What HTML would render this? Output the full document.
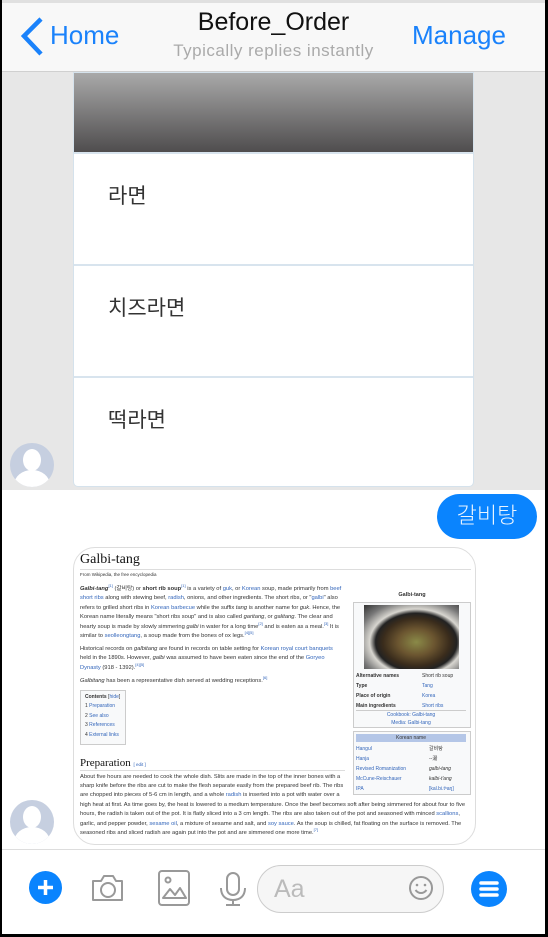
<!DOCTYPE html>
<html><head><meta charset="utf-8"><style>
*{margin:0;padding:0;box-sizing:border-box}
body{width:548px;height:937px;position:relative;overflow:hidden;background:#000;font-family:"Liberation Sans","Noto Sans CJK KR",sans-serif}
#scr{position:absolute;left:2px;top:0;width:543px;height:934px;background:#fff;overflow:hidden}
.abs{position:absolute}
.hdr{left:0;top:0;width:543px;height:72px;background:#f8f8f8;border-bottom:1px solid #d0d0d0;border-top:3px solid #e0e0e0;z-index:5}
.gray{left:0;top:72px;width:543px;height:418px;background:#e7e7e7}
.card{left:71px;top:72px;width:401px;height:415px;background:#fff;border:1px solid #d5e2ec;border-radius:0 0 5px 5px;overflow:hidden}
.grad{left:0;top:0;width:400px;height:79px;background:linear-gradient(#a9a9a9,#4f4d4e)}
.row{left:0;width:400px;height:112px;border-top:2px solid #d8e4ee;font-size:21px;color:#333;padding:26px 0 0 34px}
.av{width:44px;height:44px;border-radius:50%;background:#c6cfe0;overflow:hidden}
.av:after{content:"";position:absolute;left:13px;top:6px;width:18px;height:22px;border-radius:50%;background:#fff}
.av:before{content:"";position:absolute;left:4px;top:27px;width:36px;height:30px;border-radius:50% 50% 0 0;background:#fff}
.wiki{left:71px;top:547px;width:403px;height:298px;border:1.5px solid #ddd;border-radius:22px;background:#fff;overflow:hidden;font-size:5.75px;color:#333;line-height:9.4px}
.wiki a{color:#3366bb}
.wiki sup{font-size:4px;line-height:0;vertical-align:3px;color:#36b}
.wi{position:absolute;left:6px;top:3px;width:391px}
.wi p{margin-bottom:3.5px}
.ib{float:right;width:118px;margin-left:8px;margin-top:6px;font-size:5px;line-height:9px}
.ic{stroke:#999;fill:none;stroke-width:2}
</style></head><body><div id="scr">
<div class="abs hdr">
 <svg class="abs" style="left:17px;top:14px" width="26" height="40"><path d="M22 2 L5 19 L22 37" stroke="#1a82fb" stroke-width="4.5" fill="none"/></svg>
 <div class="abs" style="left:48px;top:17px;font-size:26px;color:#1a82fb">Home</div>
 <div class="abs" style="left:0;width:543px;text-align:center;top:5px;font-size:25px;color:#111">Before_Order</div>
 <div class="abs" style="left:0;width:543px;text-align:center;top:38px;font-size:17px;color:#aaa;letter-spacing:.5px">Typically replies instantly</div>
 <div class="abs" style="left:410px;top:17px;font-size:26px;color:#1a82fb">Manage</div>
</div>
<div class="abs gray"></div>
<div class="abs card">
 <div class="abs grad"></div>
 <div class="abs row" style="top:79px">라면</div>
 <div class="abs row" style="top:191px">치즈라면</div>
 <div class="abs row" style="top:303px">떡라면</div>
</div>
<div class="abs av" style="left:8px;top:443px"></div>
<div class="abs" style="left:435px;top:494px;width:100px;height:45px;border-radius:23px;background:#0a84fe;color:#eaf4ff;font-size:22px;text-align:center;line-height:44px;font-weight:300">갈비탕</div>
<div class="abs wiki"><div class="wi">
 <div style="font:14px 'Liberation Serif',serif;color:#111;border-bottom:1px solid #ddd;line-height:18px">Galbi-tang</div>
 <div style="font-size:4.5px;margin:1px 0 6px;line-height:8px">From Wikipedia, the free encyclopedia</div>
 <div class="ib">
  <div style="text-align:center;font-weight:bold;margin-bottom:2px;font-size:5.5px">Galbi-tang</div>
  <div style="height:126px;border:1px solid #ccc;background:#f8f9fa;position:relative">
   <div class="abs" style="left:10px;top:2px;width:95px;height:64px;background:radial-gradient(ellipse at 55% 58%,#8a8a48 0,#6b5530 25%,#3a2c1c 45%,#222 55%,#d8d6d0 63%,#777 80%,#333 100%)"></div>
   <div class="abs" style="left:2px;top:68px;width:110px;line-height:10px"><b>Alternative names</b><br><b>Type</b><br><b>Place of origin</b><br><b>Main ingredients</b></div>
   <div class="abs" style="left:68px;top:68px;line-height:10px">Short rib soup<br><a>Tang</a><br><a>Korea</a><br><a>Short ribs</a></div>
   <div class="abs" style="left:2px;top:107px;width:110px;text-align:center;line-height:8px;border-top:1px solid #ccc"><a>Cookbook: Galbi-tang</a><br><a>Media: Galbi-tang</a></div>
  </div>
  <div style="height:64px;border:1px solid #ccc;background:#f8f9fa;position:relative;margin-top:3px">
   <div class="abs" style="left:2px;top:2px;width:110px;height:8px;background:#b4c6e7;text-align:center;line-height:8px">Korean name</div>
   <div class="abs" style="left:2px;top:12px;line-height:10px"><a>Hangul</a><br><a>Hanja</a><br><a>Revised Romanization</a><br><a>McCune-Reischauer</a><br><a>IPA</a></div>
   <div class="abs" style="left:75px;top:12px;line-height:10px">갈비탕<br>--湯<br><i>galbi-tang</i><br><i>kalbi-t'ang</i><br><a>[kal.bi.tʰaŋ]</a></div>
  </div>
 </div>
 <p><b><i>Galbi-tang</i></b><sup>[1]</sup> (갈비탕) or <b>short rib soup</b><sup>[1]</sup> is a variety of <a>guk</a>, or <a>Korean</a> soup, made primarily from <a>beef short ribs</a> along with stewing beef, <a>radish</a>, onions, and other ingredients. The short ribs, or "<a>galbi</a>" also refers to grilled short ribs in <a>Korean barbecue</a> while the suffix <i>tang</i> is another name for <i>guk</i>. Hence, the Korean name literally means "short ribs soup" and is also called <i>garitang</i>, or <i>galitang</i>. The clear and hearty soup is made by slowly simmering <i>galbi</i> in water for a long time<sup>[2]</sup> and is eaten as a meal.<sup>[3]</sup> It is similar to <a>seolleongtang</a>, a soup made from the bones of ox legs.<sup>[4][5]</sup></p>
 <p>Historical records on <i>galbitang</i> are found in records on table setting for <a>Korean royal court banquets</a> held in the 1890s. However, <i>galbi</i> was assumed to have been eaten since the end of the <a>Goryeo Dynasty</a> (918 - 1392).<sup>[4][5]</sup></p>
 <p><i>Galbitang</i> has been a representative dish served at wedding receptions.<sup>[6]</sup></p>
 <div style="width:46px;height:55px;border:1px solid #ccc;background:#f8f9fa;padding:2px 4px;line-height:9.5px;font-size:5px"><b>Contents</b> [<a>hide</a>]<br>1 <a>Preparation</a><br>2 <a>See also</a><br>3 <a>References</a><br>4 <a>External links</a></div>
 <div style="font:11px 'Liberation Serif',serif;color:#111;border-bottom:1px solid #ddd;line-height:14px;margin-top:11px;margin-bottom:2px;overflow:hidden">Preparation <span style="font:4.5px sans-serif;color:#36b">[ edit ]</span></div>
 <p>About five hours are needed to cook the whole dish. Slits are made in the top of the inner bones with a sharp knife before the ribs are cut to make the flesh separate easily from the prepared beef rib. The ribs are chopped into pieces of 5-6 cm in length, and a whole <a>radish</a> is inserted into a pot with water over a high heat at first. As time goes by, the heat is lowered to a medium temperature. Once the beef becomes soft after being simmered for about four to five hours, the radish is taken out of the pot. It is flatly sliced into a 3 cm length. The ribs are also taken out of the pot and seasoned with minced <a>scallions</a>, garlic, and pepper powder, <a>sesame oil</a>, a mixture of sesame and salt, and <a>soy sauce</a>. As the soup is chilled, fat floating on the surface is removed. The seasoned ribs and sliced radish are again put into the pot and are simmered one more time.<sup>[7]</sup></p>
</div></div>
<div class="abs av" style="left:8px;top:800px"></div>
<div class="abs" style="left:0;top:849px;width:543px;height:85px;background:#fff;border-top:1px solid #ddd"></div>
<div class="abs" style="left:27px;top:871px;width:33px;height:33px;border-radius:50%;background:#0a84fe"></div>
<svg class="abs" style="left:27px;top:871px" width="33" height="33"><path d="M16.5 9v15M9 16.5h15" stroke="#fff" stroke-width="3.5"/></svg>
<svg class="abs" style="left:88px;top:872px" width="36" height="32"><path class="ic" d="M3 9h8l3-5h9l3 5h6v19H3z" stroke-linejoin="round"/><circle class="ic" cx="18" cy="18" r="7"/></svg>
<svg class="abs" style="left:155px;top:869px" width="36" height="38"><rect class="ic" x="2" y="2" width="30" height="34" rx="3"/><circle class="ic" cx="11" cy="11" r="2.5"/><path class="ic" d="M6 29l7-9 5 6 5-7 6 10z" stroke-linejoin="round"/></svg>
<svg class="abs" style="left:216px;top:871px" width="30" height="36"><rect class="ic" x="9" y="2" width="12" height="22" rx="6"/><path class="ic" d="M3 17c0 8 5 12 12 12s12-4 12-12M15 29v5M8 34h14"/></svg>
<div class="abs" style="left:255px;top:865px;width:187px;height:48px;border:1.5px solid #ccc;border-radius:24px;background:#f6f6f6"></div>
<div class="abs" style="left:272px;top:875px;font-size:25px;color:#bbb">Aa</div>
<svg class="abs" style="left:406px;top:875px" width="26" height="26"><circle class="ic" cx="13" cy="13" r="11" stroke-width="1.5"/><circle cx="9" cy="10" r="1.3" fill="#999"/><circle cx="17" cy="10" r="1.3" fill="#999"/><path class="ic" d="M7.5 15c3 4 8 4 11 0" stroke-width="1.5"/></svg>
<div class="abs" style="left:469px;top:871px;width:36px;height:36px;border-radius:50%;background:#0a84fe"></div>
<svg class="abs" style="left:469px;top:871px" width="36" height="36"><path d="M10 12h16M10 18h16M10 24h16" stroke="#fff" stroke-width="3.5" stroke-linecap="round"/></svg>
</div></body></html>
